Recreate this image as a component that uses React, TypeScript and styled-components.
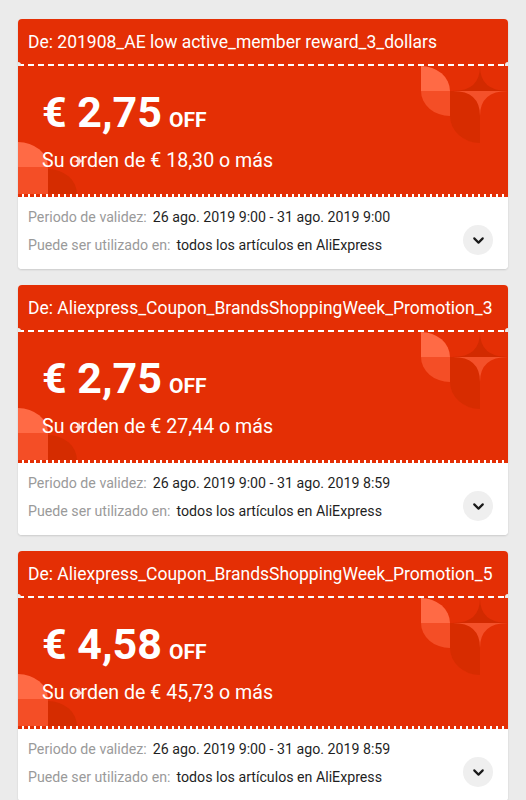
import React from "react";
import styled, { createGlobalStyle } from "styled-components";
import { ChevronDown } from "lucide-react";

const RED = "#e42f05";

const Global = createGlobalStyle`
  html, body { margin: 0; padding: 0; background: #ebebeb; }
  body { font-family: Roboto, "Noto Sans", Arial, sans-serif; -webkit-font-smoothing: antialiased; }
`;

const Page = styled.div`
  display: flex;
  flex-direction: column;
  gap: 16px;
  padding: 19px 18px 0 18px;
  background: #ebebeb;
  min-height: 800px;
  box-sizing: border-box;
`;

const Card = styled.div`
  background: #fff;
  border-radius: 4px;
  overflow: hidden;
  box-shadow: 0 1px 2px rgba(0, 0, 0, 0.14);
  display: flex;
  flex-direction: column;
`;

const Header = styled.div`
  height: 45px;
  background: ${RED};
  color: #fff;
  font-size: 17.5px;
  display: flex;
  align-items: center;
  padding-left: 10px;
  white-space: nowrap;
`;

const Perforation = styled.div`
  position: relative;
  height: 2px;
  background-color: ${RED};
  background-image: repeating-linear-gradient(90deg, #fff 0 6px, transparent 6px 10px);
  &::before, &::after {
    content: "";
    position: absolute;
    top: -2px;
    width: 6px;
    height: 6px;
    border-radius: 50%;
    background: #ebebeb;
  }
  &::before { left: -3px; }
  &::after { right: -3px; }
`;

const Body = styled.div`
  position: relative;
  height: 128px;
  background: ${RED};
  color: #fff;
  padding: 19px 0 0 24px;
  box-sizing: border-box;
  overflow: hidden;
`;

const Amount = styled.div`
  position: relative;
  z-index: 1;
  display: flex;
  align-items: baseline;
  gap: 7px;
  font-weight: 700;
  line-height: 54px;
`;

const Value = styled.span`
  font-size: 43px;
`;

const Off = styled.span`
  font-size: 21px;
`;

const Condition = styled.div`
  position: relative;
  z-index: 1;
  font-size: 19.6px;
  margin-top: 2px;
`;

const DecoTopRight = styled.svg`
  position: absolute;
  top: 0;
  right: 0;
`;

const DecoBottomLeft = styled.svg`
  position: absolute;
  left: 0;
  bottom: 0;
`;

const Sparkle = styled.svg`
  position: absolute;
  left: 55px;
  top: 89px;
  z-index: 2;
`;

const Details = styled.div`
  position: relative;
  padding: 14px 10px 14px 10px;
  background-color: #fff;
  background-image: repeating-linear-gradient(90deg, ${RED} 0 4px, #fff 4px 6px);
  background-size: 100% 3px;
  background-repeat: no-repeat;
  display: flex;
  flex-direction: column;
  gap: 9px;
`;

const Row = styled.div`
  display: flex;
  gap: 6px;
  font-size: 14.2px;
  line-height: 19px;
  white-space: nowrap;
`;

const Label = styled.span`
  color: #9a9a9a;
`;

const Text = styled.span`
  color: #1f1f1f;
`;

const Toggle = styled.button`
  position: absolute;
  right: 15px;
  bottom: 14px;
  width: 30px;
  height: 30px;
  border-radius: 50%;
  border: none;
  background: #efefef;
  display: flex;
  align-items: center;
  justify-content: center;
  padding: 0;
  color: #1a1a1a;
`;

type Coupon = {
  from: string;
  value: string;
  min: string;
  period: string;
};

const coupons: Coupon[] = [
  {
    from: "201908_AE low active_member reward_3_dollars",
    value: "2,75",
    min: "18,30",
    period: "26 ago. 2019 9:00 - 31 ago. 2019 9:00",
  },
  {
    from: "Aliexpress_Coupon_BrandsShoppingWeek_Promotion_3",
    value: "2,75",
    min: "27,44",
    period: "26 ago. 2019 9:00 - 31 ago. 2019 8:59",
  },
  {
    from: "Aliexpress_Coupon_BrandsShoppingWeek_Promotion_5",
    value: "4,58",
    min: "45,73",
    period: "26 ago. 2019 9:00 - 31 ago. 2019 8:59",
  },
];

const TopRightShapes = () => (
  <DecoTopRight width="92" height="80" viewBox="0 0 92 80">
    <path d="M5 0 A29 25 0 0 1 34 25 L5 25 Z" fill="#ff6a45" />
    <path d="M5 25 L34 25 L34 50 A29 25 0 0 1 5 25 Z" fill="#f44e26" />
    <path d="M34 25 L64 25 L64 77 A30 27 0 0 1 34 50 Z" fill="#d52c00" opacity="0.9" />
    <path d="M37 25 Q64 25 64 0 Q64 25 92 25 Z" fill="#d22a00" />
    <path d="M37 25 Q64 25 64 50 Q64 25 92 25 Z" fill="#f4512a" />
  </DecoTopRight>
);

const BottomLeftShapes = () => (
  <DecoBottomLeft width="62" height="54" viewBox="0 0 62 54">
    <path d="M0 2 A30 25 0 0 1 30 27 L0 27 Z" fill="#ff6a45" />
    <rect x="0" y="27" width="30" height="27" fill="#f44e26" />
    <path d="M30 29 A29 25 0 0 1 59 54 L30 54 Z" fill="#d52c00" />
  </DecoBottomLeft>
);

const SparkleIcon = () => (
  <Sparkle width="12" height="12" viewBox="0 0 12 12">
    <path d="M6 0 Q6 6 12 6 Q6 6 6 12 Q6 6 0 6 Q6 6 6 0 Z" fill="#ffd7cc" />
  </Sparkle>
);

const CouponCard = ({ c }: { c: Coupon }) => (
  <Card>
    <Header>De: {c.from}</Header>
    <Perforation />
    <Body>
      <TopRightShapes />
      <BottomLeftShapes />
      <SparkleIcon />
      <Amount>
        <Value>€ {c.value}</Value>
        <Off>OFF</Off>
      </Amount>
      <Condition>Su orden de € {c.min} o más</Condition>
    </Body>
    <Details>
      <Row>
        <Label>Periodo de validez:</Label>
        <Text>{c.period}</Text>
      </Row>
      <Row>
        <Label>Puede ser utilizado en:</Label>
        <Text>todos los artículos en AliExpress</Text>
      </Row>
      <Toggle aria-label="Expandir">
        <ChevronDown size={17} strokeWidth={3} />
      </Toggle>
    </Details>
  </Card>
);

export default function App() {
  return (
    <>
      <Global />
      <Page>
        {coupons.map((c, i) => (
          <CouponCard key={i} c={c} />
        ))}
      </Page>
    </>
  );
}
